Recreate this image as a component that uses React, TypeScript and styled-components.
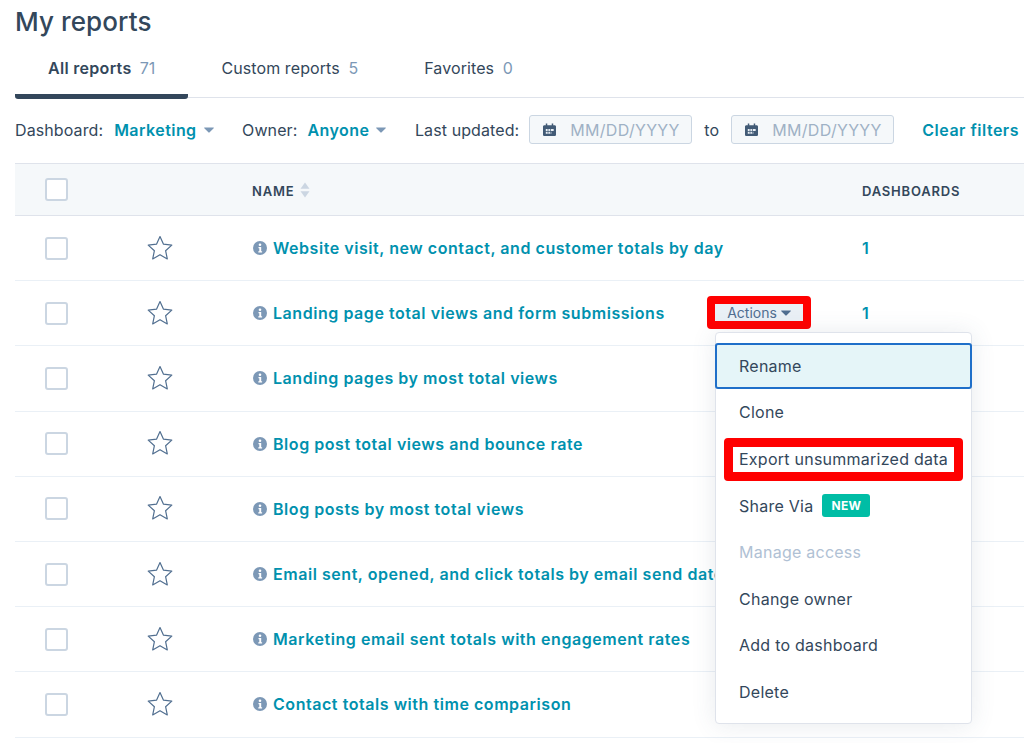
import React from 'react';
import styled, { createGlobalStyle } from 'styled-components';

const TEXT = '#33475b';
const LINK = '#0091ae';
const MUTED = '#7c98b6';
const LINE = '#dfe3eb';
const FONT = '"Inter", "Liberation Sans", sans-serif';

const REPORTS = [
  'Website visit, new contact, and customer totals by day',
  'Landing page total views and form submissions',
  'Landing pages by most total views',
  'Blog post total views and bounce rate',
  'Blog posts by most total views',
  'Email sent, opened, and click totals by email send date',
  'Marketing email sent totals with engagement rates',
  'Contact totals with time comparison',
];

const MENU_ITEMS = ['Rename', 'Clone', 'Export unsummarized data', 'Share Via', 'Manage access', 'Change owner', 'Add to dashboard', 'Delete'];

function Caret() {
  return (
    <CaretIcon width="10" height="6" viewBox="0 0 10 6">
      <path d="M0.6 0.5h8.8c.4 0 .6.5.3.8L5.4 5.5c-.2.2-.6.2-.8 0L.3 1.3C0 1 .2.5.6.5z" fill="currentColor" />
    </CaretIcon>
  );
}

function CalendarIcon() {
  return (
    <svg width="13" height="14" viewBox="0 0 14 15">
      <path d="M3 0.5h1.600v2H9.400V0.500H11v2h1.500c.8 0 1.500.7 1.500 1.500v8.500c0 .8-.7 1.500-1.500 1.500h-11C.7 14 0 13.300 0 12.500V4c0-.8.7-1.500 1.500-1.500H3z" fill="#425b76" />
      <path d="M3 6.500h8.500v2H3zM3 9.500h6v2H3z" fill="#eaf0f6" />
      <path d="M5 6.500h.8v5H5zM7.500 6.500h.8v5h-.8z" fill="#425b76" />
    </svg>
  );
}

function InfoIcon() {
  return (
    <InfoSvg width="14" height="14" viewBox="0 0 14 14">
      <circle cx="7" cy="7" r="7" fill={MUTED} />
      <circle cx="7" cy="3.800" r="1.300" fill="#fff" />
      <path d="M5.500 6h2.700v4.200h.9v1.200H5.300v-1.200h1V7.200h-.8z" fill="#fff" />
    </InfoSvg>
  );
}

function StarIcon() {
  return (
    <svg width="26" height="25" viewBox="0 0 26 25">
      <path
        d="M13 1.500l3.500 7.700 8.300.9-6.200 5.600 1.700 8.200L13 19.700l-7.300 4.200 1.700-8.200-6.200-5.600 8.300-.9z"
        fill="none"
        stroke="#516f90"
        strokeWidth="1.200"
        strokeLinejoin="round"
      />
    </svg>
  );
}

function SortIcon() {
  return (
    <svg width="10" height="16" viewBox="0 0 10 16">
      <path d="M5 0.500l4.500 6.200H.5z" fill="#cbd6e2" />
      <path d="M5 15.500L.5 9.300h9z" fill="#cbd6e2" />
    </svg>
  );
}

export default function App() {
  return (
    <Page>
      <GlobalStyle />
      <Title>My reports</Title>
      <Tabs>
        <Tab $active>
          All reports <TabCount>71</TabCount>
        </Tab>
        <Tab>
          Custom reports <TabCount>5</TabCount>
        </Tab>
        <Tab>
          Favorites <TabCount>0</TabCount>
        </Tab>
      </Tabs>
      <Filters>
        <FilterLabel $first>Dashboard:</FilterLabel>
        <FilterValue>Marketing</FilterValue>
        <Caret />
        <FilterLabel $gap>Owner:</FilterLabel>
        <FilterValue>Anyone</FilterValue>
        <Caret />
        <FilterLabel $gap>Last updated:</FilterLabel>
        <DateInput>
          <CalendarIcon />
          <DateHint>MM/DD/YYYY</DateHint>
        </DateInput>
        <ToLabel>to</ToLabel>
        <DateInput>
          <CalendarIcon />
          <DateHint>MM/DD/YYYY</DateHint>
        </DateInput>
        <ClearFilters>Clear filters</ClearFilters>
      </Filters>
      <Table>
        <HeadRow>
          <CheckCell>
            <Checkbox />
          </CheckCell>
          <StarCell />
          <NameCell>
            <NameLabel>NAME</NameLabel>
            <SortIcon />
          </NameCell>
          <HeadLabel>DASHBOARDS</HeadLabel>
        </HeadRow>
        {REPORTS.map((name, index) => (
          <Row key={name}>
            <CheckCell>
              <Checkbox />
            </CheckCell>
            <StarCell>
              <StarIcon />
            </StarCell>
            <NameCell>
              <InfoIcon />
              <ReportName>{name}</ReportName>
              {index === 1 && (
                <ActionsMark>
                  <ActionsButton>
                    Actions <Caret />
                  </ActionsButton>
                </ActionsMark>
              )}
            </NameCell>
            {index < 2 && <CountLink>1</CountLink>}
          </Row>
        ))}
      </Table>
      <Menu>
        {MENU_ITEMS.map((item) => (
          <MenuItem key={item} $focused={item === 'Rename'} $disabled={item === 'Manage access'}>
            {item === 'Export unsummarized data' ? <RedMark>{item}</RedMark> : item}
            {item === 'Share Via' && <NewBadge>NEW</NewBadge>}
          </MenuItem>
        ))}
      </Menu>
    </Page>
  );
}

const GlobalStyle = createGlobalStyle`
  html, body {
    margin: 0;
    background: #fff;
  }
  * {
    box-sizing: border-box;
  }
`;

const Page = styled.div`
  position: relative;
  width: 1024px;
  height: 743px;
  overflow: hidden;
  padding-left: 15px;
  background: #fff;
  color: ${TEXT};
  font-family: ${FONT};
  font-size: 16px;
  letter-spacing: 0.1px;
`;

const Title = styled.h1`
  margin: 0;
  height: 44px;
  font-size: 26px;
  font-weight: 500;
  line-height: 44px;
`;

const Tabs = styled.div`
  display: flex;
  height: 54px;
  border-bottom: 1px solid ${LINE};
`;

const Tab = styled.div<{ $active?: boolean }>`
  height: 55px;
  padding: 14px 33px 0;
  font-weight: ${(props) => (props.$active ? 600 : 400)};
  letter-spacing: ${(props) => (props.$active ? '0.3px' : '0.1px')};
  line-height: 20px;
  border-bottom: ${(props) => (props.$active ? `5px solid ${TEXT}` : 'none')};
  border-radius: 3px;
`;

const TabCount = styled.span`
  margin-left: 4px;
  color: ${MUTED};
  font-weight: 400;
  letter-spacing: 0;
`;

const Filters = styled.div`
  display: flex;
  align-items: center;
  height: 65px;
  padding-bottom: 2px;
  white-space: nowrap;
`;

const FilterLabel = styled.span<{ $gap?: boolean; $first?: boolean }>`
  margin-left: ${(props) => (props.$gap ? '28.5px' : '0')};
  margin-right: ${(props) => (props.$first ? '11px' : '10px')};
`;

const FilterValue = styled.span`
  color: ${LINK};
  font-weight: 600;
  letter-spacing: 0.45px;
`;

const CaretIcon = styled.svg`
  margin-left: 7px;
  color: ${MUTED};
`;

const DateInput = styled.div`
  display: flex;
  align-items: center;
  gap: 14px;
  width: 163px;
  height: 29px;
  padding-left: 13px;
  background: #f5f8fa;
  border: 1px solid #cbd6e2;
  border-radius: 3px;
`;

const DateHint = styled.span`
  color: #9fb1c5;
  letter-spacing: 0.3px;
`;

const ToLabel = styled.span`
  width: 39px;
  text-align: center;
`;

const ClearFilters = styled.span`
  margin-left: 28px;
  color: ${LINK};
  font-weight: 600;
  letter-spacing: 0.5px;
`;

const Table = styled.div`
  border-top: 1px solid ${LINE};
`;

const HeadRow = styled.div`
  display: flex;
  align-items: center;
  height: 52px;
  background: #f5f8fa;
  border-bottom: 1px solid ${LINE};
`;

const Row = styled.div`
  display: flex;
  align-items: center;
  height: 65.2px;
  border-bottom: 1px solid #eaf0f6;
`;

const CheckCell = styled.div`
  width: 120px;
  padding-left: 30px;
`;

const Checkbox = styled.div`
  width: 23px;
  height: 23px;
  background: #fff;
  border: 2px solid #cbd6e2;
  border-radius: 3px;
`;

const StarCell = styled.div`
  display: flex;
  width: 118px;
  padding-left: 12px;
  padding-bottom: 2px;
`;

const NameCell = styled.div`
  display: flex;
  align-items: center;
  width: 609px;
`;

const HeadLabel = styled.span`
  margin-top: 2px;
  margin-right: 6px;
  font-size: 13px;
  font-weight: 600;
  letter-spacing: 0.8px;
`;

const NameLabel = styled(HeadLabel)`
  margin-left: -1px;
`;

const InfoSvg = styled.svg`
  flex: none;
  margin-right: 6px;
`;

const ReportName = styled.span`
  color: ${LINK};
  font-weight: 600;
  letter-spacing: 0.55px;
  white-space: nowrap;
`;

const ActionsMark = styled.div`
  margin-left: auto;
  margin-right: 51px;
  margin-bottom: 1px;
  border: 8px solid #f00;
  border-radius: 4px;
`;

const ActionsButton = styled.div`
  display: flex;
  align-items: center;
  justify-content: center;
  width: 88px;
  height: 17px;
  background: #eaf0f6;
  color: #506e91;
  font-size: 14px;
  letter-spacing: 0;

  svg {
    margin-left: 4px;
    color: #506e91;
  }
`;

const CountLink = styled.span`
  color: ${LINK};
  font-weight: 600;
`;

const Menu = styled.div`
  position: absolute;
  left: 715px;
  top: 332px;
  width: 257px;
  height: 392px;
  padding-top: 9.6px;
  background: #fff;
  border: 1px solid ${LINE};
  border-radius: 4px;
  box-shadow: 0 1px 24px 0 rgba(66, 91, 118, 0.12);
`;

const MenuItem = styled.div<{ $focused?: boolean; $disabled?: boolean }>`
  display: flex;
  align-items: center;
  height: 46.6px;
  padding-left: 23px;
  color: ${(props) => (props.$disabled ? '#b0c1d4' : TEXT)};
  background: ${(props) => (props.$focused ? '#e5f5f8' : 'transparent')};
  letter-spacing: 0.25px;
  ${(props) => props.$focused && 'margin: 0 -1px; padding-left: 22px; border: 2px solid #1f6fc9; border-radius: 3px;'}
`;

const RedMark = styled.span`
  display: flex;
  align-items: center;
  width: 239px;
  height: 43px;
  margin-left: -15px;
  padding-left: 6px;
  white-space: nowrap;
  border: 9px solid #f00;
  border-radius: 4px;
`;

const NewBadge = styled.span`
  margin-left: 9px;
  width: 48px;
  height: 23px;
  background: #00bda5;
  color: #fff;
  font-size: 12px;
  font-weight: 700;
  letter-spacing: 0.3px;
  line-height: 23px;
  text-align: center;
  border-radius: 3px;
`;
